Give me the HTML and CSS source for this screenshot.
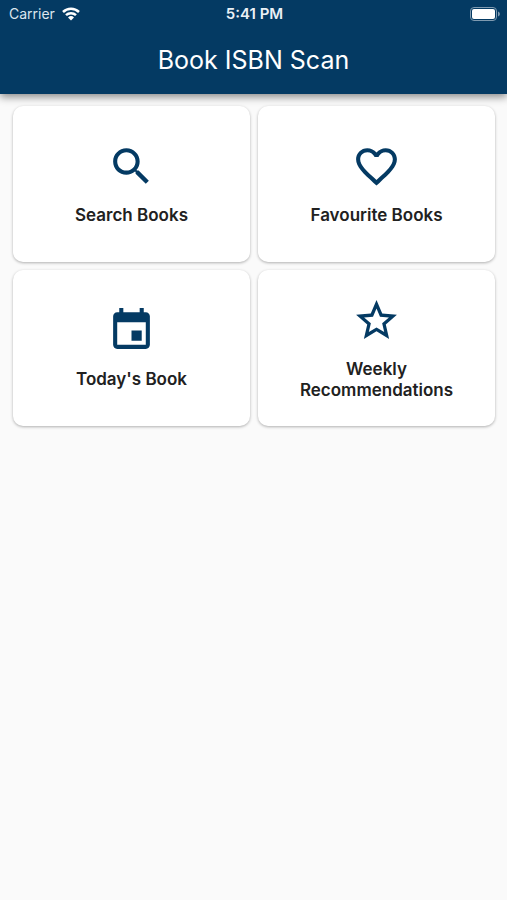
FILE: index.html
```html
<!DOCTYPE html>
<html lang="en">
<head>
    <meta charset="UTF-8">
    <meta name="viewport" content="width=device-width, initial-scale=1.0">
    <title>Book ISBN Scan</title>
    <link rel="stylesheet" href="styles.css">
</head>
<body>
    <header class="app-bar">
        <div class="status-bar">
            <div class="carrier">
                <span>Carrier</span>
                <svg class="wifi" viewBox="0 0 18 14" aria-hidden="true">
                    <path d="M1 5a11.5 11.5 0 0 1 16 0" />
                    <path d="M4 8.200a7.200 7.200 0 0 1 10 0" />
                    <path class="dot" d="M9 13.500l-3-3a4.300 4.300 0 0 1 6 0z" />
                </svg>
            </div>
            <span class="time">5:41 PM</span>
            <div class="battery-slot">
                <svg class="battery" viewBox="0 0 30 14" aria-hidden="true">
                    <rect class="shell" x="0.500" y="0.500" width="26" height="13" rx="3.500" />
                    <rect class="level" x="2" y="2" width="23" height="10" rx="2" />
                    <path class="cap" d="M28 4.500c2.500 1 2.500 4 0 5z" />
                </svg>
            </div>
        </div>
        <h1>Book ISBN Scan</h1>
    </header>

    <main class="menu">
        <button type="button" class="card">
            <svg class="icon" viewBox="0 0 24 24" aria-hidden="true">
                <path d="M15.5 14h-.79l-.28-.27C15.41 12.59 16 11.110 16 9.500 16 5.910 13.090 3 9.500 3S3 5.910 3 9.500 5.910 16 9.500 16c1.610 0 3.090-.59 4.230-1.570l.27.28v.79l5 4.990L20.490 19l-4.990-5zm-6 0C7.010 14 5 11.990 5 9.500S7.010 5 9.500 5 14 7.010 14 9.500 11.990 14 9.500 14z" />
            </svg>
            <span>Search Books</span>
        </button>
        <button type="button" class="card">
            <svg class="icon" viewBox="0 0 24 24" aria-hidden="true">
                <path d="M16.5 3c-1.740 0-3.410.81-4.500 2.090C10.910 3.810 9.240 3 7.500 3 4.420 3 2 5.420 2 8.500c0 3.780 3.400 6.860 8.550 11.540L12 21.350l1.450-1.320C18.600 15.360 22 12.280 22 8.500 22 5.420 19.580 3 16.500 3zm-4.400 15.550l-.1.100-.1-.1C7.140 14.240 4 11.390 4 8.500 4 6.500 5.500 5 7.500 5c1.540 0 3.040.99 3.570 2.360h1.870C13.460 5.990 14.960 5 16.500 5c2 0 3.500 1.500 3.500 3.500 0 2.890-3.140 5.740-7.900 10.050z" />
            </svg>
            <span>Favourite Books</span>
        </button>
        <button type="button" class="card">
            <svg class="icon" viewBox="0 0 24 24" aria-hidden="true">
                <path d="M17 12h-5v5h5v-5zM16 1v2H8V1H6v2H5c-1.110 0-1.990.9-1.990 2L3 19c0 1.100.89 2 2 2h14c1.100 0 2-.9 2-2V5c0-1.100-.9-2-2-2h-1V1h-2zm3 18H5V8h14v11z" />
            </svg>
            <span>Today's Book</span>
        </button>
        <button type="button" class="card">
            <svg class="icon" viewBox="0 0 24 24" aria-hidden="true">
                <path d="M22 9.240l-7.190-.62L12 2 9.190 8.630 2 9.240l5.460 4.730L5.820 21 12 17.270 18.180 21l-1.630-7.030L22 9.240zM12 15.400l-3.760 2.270 1-4.280-3.320-2.880 4.380-.38L12 6.100l1.710 4.040 4.380.38-3.320 2.880 1 4.280L12 15.400z" />
            </svg>
            <span>Weekly Recommendations</span>
        </button>
    </main>
</body>
</html>
```
FILE: styles.css
```css
* {
    box-sizing: border-box;
}
body {
    margin: 0;
    min-height: 100vh;
    font-family: Inter, "Liberation Sans", sans-serif;
    background-color: #fafafa;
    color: #212121;
}
.app-bar {
    background-color: #043a63;
    color: white;
    box-shadow: 0 3px 8px rgba(0, 0, 0, 0.45);
}
.status-bar {
    display: grid;
    grid-template-columns: 1fr auto 1fr;
    align-items: center;
    height: 27px;
    padding: 0 7px 0 9px;
    font-size: 14px;
}
.carrier {
    display: flex;
    align-items: center;
    gap: 7px;
    color: #dce6ee;
}
.wifi {
    width: 18px;
    height: 14px;
    fill: none;
    stroke: white;
    stroke-width: 2.5;
}
.wifi .dot {
    fill: white;
    stroke: none;
}
.time {
    font-size: 15px;
    font-weight: 600;
    color: #eaf0f5;
}
.battery-slot {
    display: flex;
    justify-content: flex-end;
}
.battery {
    width: 30px;
    height: 14px;
}
.battery .shell {
    fill: none;
    stroke: #7f9ab0;
}
.battery .level {
    fill: white;
}
.battery .cap {
    fill: #7f9ab0;
}
h1 {
    margin: 0;
    padding: 18px 0 19px;
    font-size: 25px;
    line-height: 30px;
    font-weight: 400;
    text-align: center;
}
.menu {
    display: grid;
    grid-template-columns: 1fr 1fr;
    gap: 8px;
    padding: 12px 12px 12px 13px;
}
.card {
    display: flex;
    flex-direction: column;
    align-items: center;
    justify-content: center;
    gap: 14px;
    min-height: 156px;
    padding: 16px;
    border: none;
    border-radius: 10px;
    background: white;
    box-shadow: 0 1px 3px rgba(0, 0, 0, 0.3);
    color: inherit;
    font-family: inherit;
    font-size: 17px;
    line-height: 21px;
    font-weight: 600;
    text-align: center;
    cursor: pointer;
}
.icon {
    width: 49px;
    height: 49px;
    fill: #043a63;
}
```
